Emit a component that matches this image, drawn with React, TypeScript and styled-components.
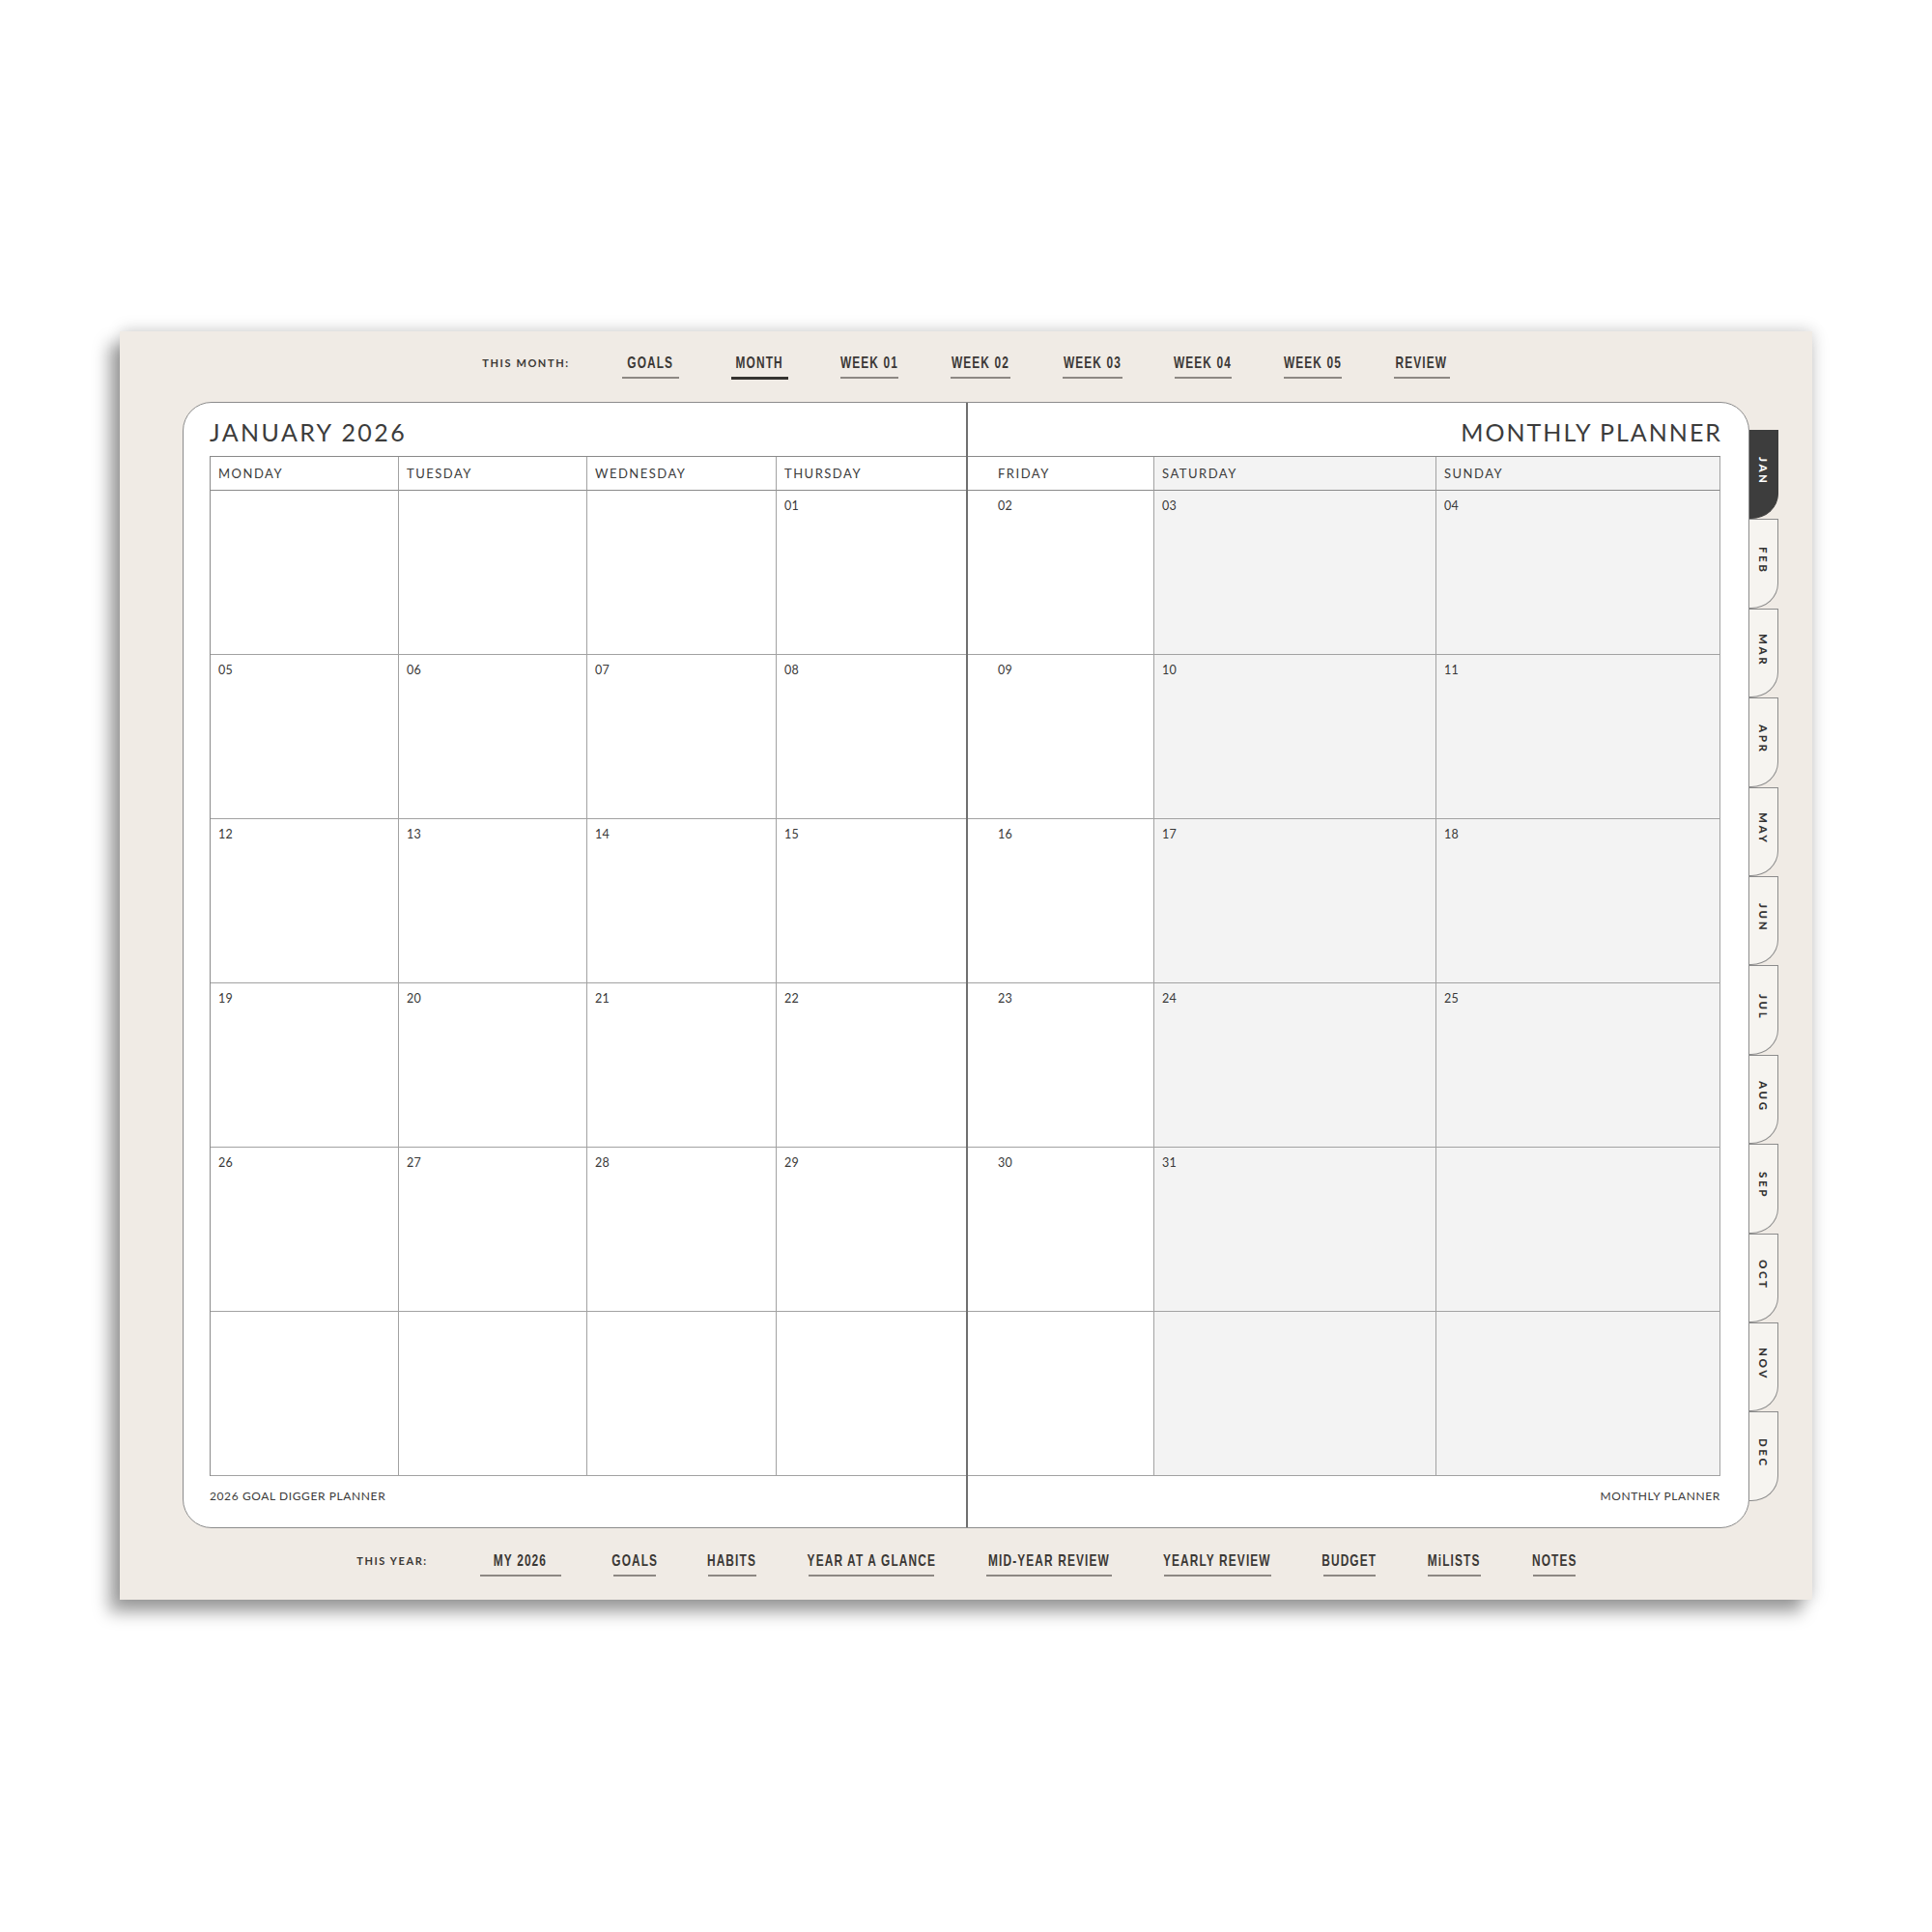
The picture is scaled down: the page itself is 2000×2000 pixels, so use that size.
import React from "react";
import styled, { createGlobalStyle } from "styled-components";

const Global = createGlobalStyle`
  html, body { margin: 0; padding: 0; background: #ffffff; }
  body { font-family: Lato, "Open Sans", sans-serif; color: #3b3835; }
`;

const Stage = styled.div`
  width: 2000px;
  height: 2000px;
  box-sizing: border-box;
  padding: 343px 0 0 124px;
`;

const Sheet = styled.div`
  width: 1752px;
  height: 1313px;
  background: #f0ebe5;
  box-shadow: -11px 13px 16px rgba(0, 0, 0, 0.36), 4px 2px 16px rgba(0, 0, 0, 0.08),
    0 -4px 14px rgba(0, 0, 0, 0.1);
  display: flex;
  flex-direction: column;
`;

const NavBar = styled.nav<{ $top: number; $height: number }>`
  height: ${(p) => p.$height}px;
  box-sizing: border-box;
  padding-top: ${(p) => p.$top}px;
  display: flex;
  justify-content: center;
  align-items: flex-start;
  gap: 54px;
`;

const NavLabel = styled.span`
  font-family: Lato, sans-serif;
  font-weight: 700;
  font-size: 11px;
  letter-spacing: 1.6px;
  line-height: 20px;
  color: #3b3835;
`;

const NavLink = styled.span<{ $active?: boolean; $w: number }>`
  width: ${(p) => p.$w}px;
  display: flex;
  justify-content: center;
  padding-bottom: 4px;
  border-bottom: ${(p) => (p.$active ? "3px solid #353330" : "2px solid #8d8883")};
`;

const NavText = styled.span`
  display: inline-block;
  white-space: nowrap;
  transform: scaleX(0.7);
  transform-origin: center;
  font-family: "Liberation Sans", Arial, sans-serif;
  font-weight: 700;
  font-size: 17px;
  letter-spacing: 1.6px;
  line-height: 20px;
  color: #3b3835;
`;

const CardRow = styled.div`
  display: flex;
  align-items: flex-start;
  padding-left: 65px;
`;

const Card = styled.div`
  width: 1622px;
  height: 1166px;
  box-sizing: border-box;
  border: 1px solid #8c8c8c;
  border-radius: 30px;
  background: #ffffff;
  display: flex;
  overflow: hidden;
`;

const Page = styled.section<{ $right?: boolean }>`
  width: 810px;
  box-sizing: border-box;
  display: flex;
  flex-direction: column;
  padding: ${(p) => (p.$right ? "0 29px 0 0" : "0 0 0 27px")};
  border-left: ${(p) => (p.$right ? "2px solid #6f6f6f" : "none")};
  text-align: ${(p) => (p.$right ? "right" : "left")};
`;

const TitleRow = styled.div`
  height: 55px;
  box-sizing: border-box;
  padding-top: 15px;
`;

const Title = styled.h1<{ $right?: boolean }>`
  margin: 0;
  font-family: Lato, sans-serif;
  font-weight: 400;
  font-size: 25px;
  line-height: 30px;
  letter-spacing: ${(p) => (p.$right ? "2px" : "2.4px")};
  margin-right: ${(p) => (p.$right ? "-2px" : "0")};
  color: #3c3c3c;
`;

const Grid = styled.div<{ $cols: string; $right?: boolean }>`
  display: grid;
  grid-template-columns: ${(p) => p.$cols};
  grid-template-rows: 35px repeat(6, 170px);
  border-top: 1px solid #8a8a8a;
  border-left: ${(p) => (p.$right ? "none" : "1px solid #8a8a8a")};
  text-align: left;
`;

const HeadCell = styled.div<{ $weekend?: boolean; $pad: number; $last?: boolean }>`
  box-sizing: border-box;
  background: ${(p) => (p.$weekend ? "#f3f3f3" : "#ffffff")};
  border-right: ${(p) => (p.$last ? "none" : "1px solid #a2a2a2")};
  border-bottom: 1px solid #8a8a8a;
  padding-left: ${(p) => p.$pad}px;
  display: flex;
  align-items: center;
  font-family: Lato, sans-serif;
  font-size: 13px;
  letter-spacing: 1.5px;
  color: #3c3c3c;
`;

const DayCell = styled.div<{ $weekend?: boolean; $pad: number; $last?: boolean }>`
  box-sizing: border-box;
  background: ${(p) => (p.$weekend ? "#f3f3f3" : "#ffffff")};
  border-right: ${(p) => (p.$last ? "none" : "1px solid #a2a2a2")};
  border-bottom: 1px solid #a2a2a2;
  padding: 9px 0 0 ${(p) => p.$pad}px;
  font-family: Lato, sans-serif;
  font-size: 12.5px;
  line-height: 14px;
  letter-spacing: 0.3px;
  color: #383838;
`;

const Footer = styled.footer`
  padding-top: 13px;
  font-family: Lato, sans-serif;
  font-size: 12px;
  line-height: 16px;
  letter-spacing: 0.6px;
  color: #3b3b3b;
`;

const TabColumn = styled.div`
  display: flex;
  flex-direction: column;
  padding-top: 29px;
`;

const Tab = styled.div<{ $active?: boolean }>`
  width: 30px;
  height: 92.4px;
  box-sizing: border-box;
  background: ${(p) => (p.$active ? "#3d3d3d" : "#f6f4f0")};
  border: 1px solid ${(p) => (p.$active ? "#3d3d3d" : "#8c8c8c")};
  border-left: none;
  border-bottom-right-radius: 28px 26px;
  display: flex;
  align-items: center;
  justify-content: center;
  padding-bottom: 6px;
  color: ${(p) => (p.$active ? "#ffffff" : "#333333")};
`;

const TabText = styled.span`
  writing-mode: vertical-rl;
  font-family: Lato, sans-serif;
  font-weight: 900;
  font-size: 11.5px;
  letter-spacing: 2.6px;
`;

const topNav: [string, number][] = [
  ["GOALS", 59],
  ["MONTH", 59],
  ["WEEK 01", 60],
  ["WEEK 02", 62],
  ["WEEK 03", 62],
  ["WEEK 04", 59],
  ["WEEK 05", 60],
  ["REVIEW", 58],
];
const bottomNav: [string, number][] = [
  ["MY 2026", 84],
  ["GOALS", 44],
  ["HABITS", 50],
  ["YEAR AT A GLANCE", 130],
  ["MID-YEAR REVIEW", 130],
  ["YEARLY REVIEW", 111],
  ["BUDGET", 54],
  ["MiLISTS", 55],
  ["NOTES", 44],
];
const months = ["JAN", "FEB", "MAR", "APR", "MAY", "JUN", "JUL", "AUG", "SEP", "OCT", "NOV", "DEC"];

const weeks: string[][] = [
  ["", "", "", "01", "02", "03", "04"],
  ["05", "06", "07", "08", "09", "10", "11"],
  ["12", "13", "14", "15", "16", "17", "18"],
  ["19", "20", "21", "22", "23", "24", "25"],
  ["26", "27", "28", "29", "30", "31", ""],
  ["", "", "", "", "", "", ""],
];

const leftDays = ["MONDAY", "TUESDAY", "WEDNESDAY", "THURSDAY"];
const rightDays = ["FRIDAY", "SATURDAY", "SUNDAY"];

export default function App() {
  return (
    <>
      <Global />
      <Stage>
        <Sheet>
          <NavBar $top={23} $height={73}>
            <NavLabel>THIS MONTH:</NavLabel>
            {topNav.map(([t, w]) => (
              <NavLink key={t} $active={t === "MONTH"} $w={w}>
                <NavText>{t}</NavText>
              </NavLink>
            ))}
          </NavBar>

          <CardRow>
            <Card>
              <Page>
                <TitleRow>
                  <Title>JANUARY 2026</Title>
                </TitleRow>
                <Grid $cols="195px 195px 196px 196px">
                  {leftDays.map((d, i) => (
                    <HeadCell key={d} $pad={8} $last={i === 3}>
                      {d}
                    </HeadCell>
                  ))}
                  {weeks.map((w, r) =>
                    w.slice(0, 4).map((n, i) => (
                      <DayCell key={`l${r}-${i}`} $pad={8} $last={i === 3}>
                        {n}
                      </DayCell>
                    ))
                  )}
                </Grid>
                <Footer>2026 GOAL DIGGER PLANNER</Footer>
              </Page>
              <Page $right>
                <TitleRow>
                  <Title $right>MONTHLY PLANNER</Title>
                </TitleRow>
                <Grid $cols="193px 292px 294px" $right>
                  {rightDays.map((d, i) => (
                    <HeadCell key={d} $pad={i === 0 ? 31 : 8} $weekend={i > 0}>
                      {d}
                    </HeadCell>
                  ))}
                  {weeks.map((w, r) =>
                    w.slice(4).map((n, i) => (
                      <DayCell key={`r${r}-${i}`} $pad={i === 0 ? 31 : 8} $weekend={i > 0}>
                        {n}
                      </DayCell>
                    ))
                  )}
                </Grid>
                <Footer>MONTHLY PLANNER</Footer>
              </Page>
            </Card>
            <TabColumn>
              {months.map((m) => (
                <Tab key={m} $active={m === "JAN"}>
                  <TabText>{m}</TabText>
                </Tab>
              ))}
            </TabColumn>
          </CardRow>

          <NavBar $top={24} $height={74}>
            <NavLabel>THIS YEAR:</NavLabel>
            {bottomNav.map(([t, w]) => (
              <NavLink key={t} $w={w}>
                <NavText>{t}</NavText>
              </NavLink>
            ))}
          </NavBar>
        </Sheet>
      </Stage>
    </>
  );
}
